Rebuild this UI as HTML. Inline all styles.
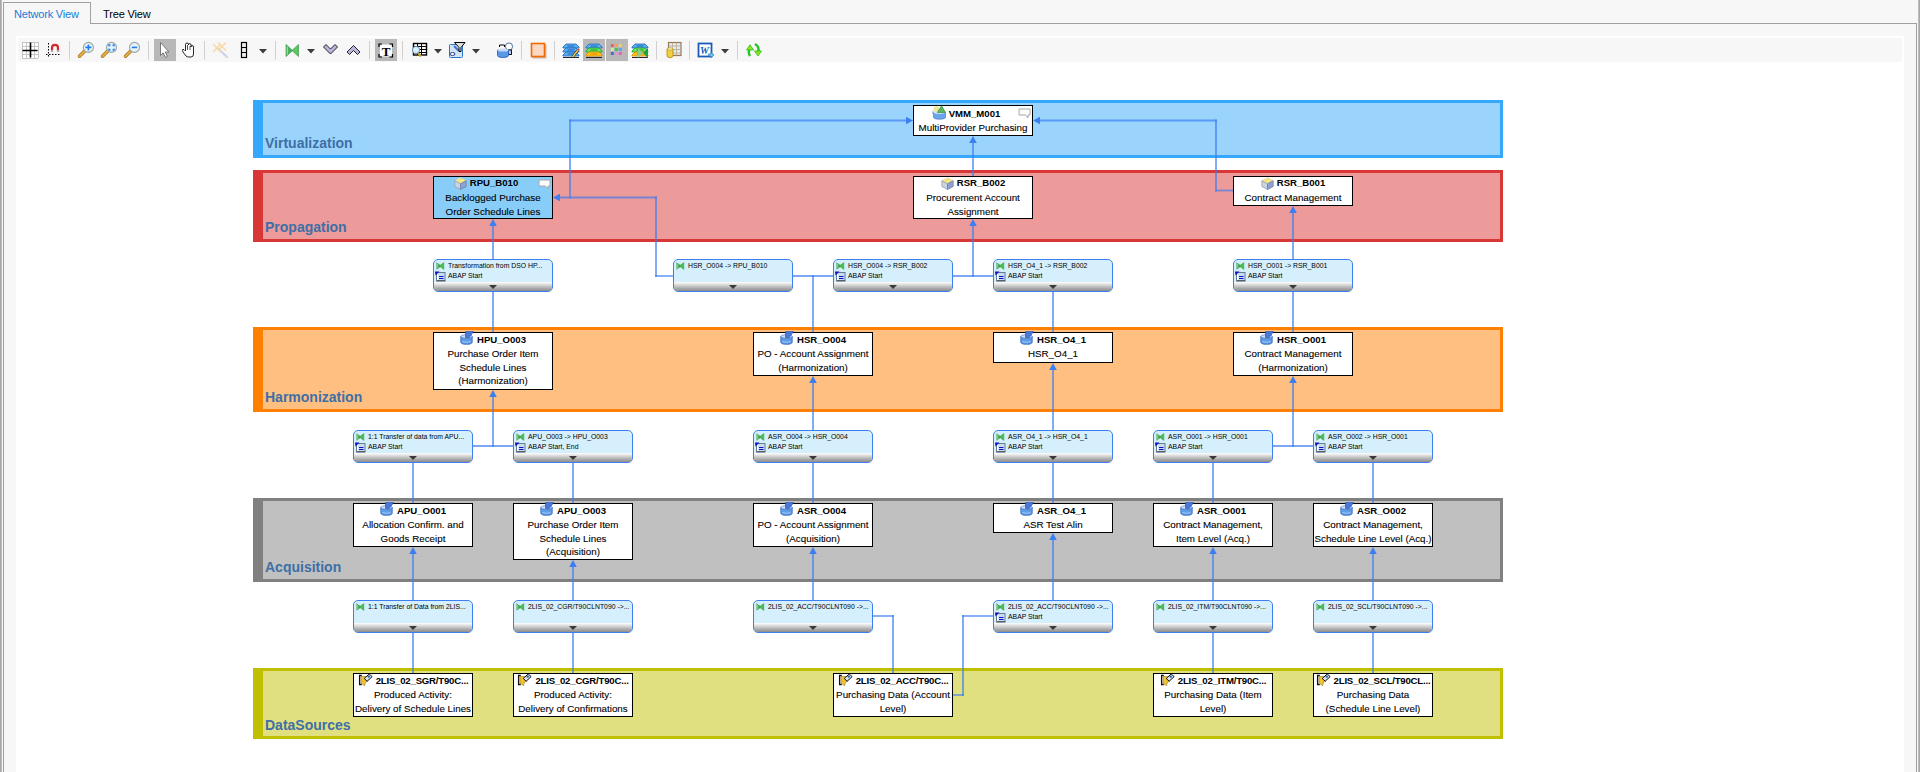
<!DOCTYPE html>
<html><head><meta charset="utf-8">
<style>
*{box-sizing:border-box;}
html,body{margin:0;padding:0;}
body{width:1920px;height:772px;overflow:hidden;position:relative;background:#f7f7f7;font-family:"Liberation Sans",sans-serif;}
.a{position:absolute;}
.band{position:absolute;left:253px;width:1250px;border-style:solid;border-width:3px 3px 3px 10px;}
.blab{position:absolute;left:12px;font-weight:bold;font-size:14px;color:#3e6fa6;line-height:14px;}
.n{position:absolute;width:120px;border:1px solid #000;text-align:center;color:#000;}
.nt{position:relative;top:-1px;height:14px;line-height:14px;font-size:9.6px;font-weight:bold;white-space:nowrap;}
.nt svg{vertical-align:-2px;margin-right:3px;}
.nl{height:13.5px;line-height:13.5px;font-size:9.8px;white-space:nowrap;-webkit-text-stroke:0.1px #000;}
.cm{position:absolute;right:1px;top:2px;line-height:0;}
.cm svg{display:block;}
.t{position:absolute;width:120px;height:33px;border:1px solid #3b7ff0;border-radius:5px;background:#d6effc;overflow:hidden;}
.tl{position:absolute;left:14px;font-size:6.85px;line-height:10px;white-space:nowrap;color:#000;}
.ti{position:absolute;left:2px;line-height:0;}
.ti svg{display:block;}
.tb{position:absolute;left:0;right:0;bottom:0;height:9.5px;background:linear-gradient(#fefefe,#e2e2e2 25%,#b0b0b0 65%,#8c8c8c);}
.tri{position:absolute;left:55px;bottom:2.3px;width:0;height:0;border-left:4px solid transparent;border-right:4px solid transparent;border-top:4px solid #3a3a3a;}
.tbi{position:absolute;top:42px;}
.sep{position:absolute;top:41px;width:1px;height:18px;background:#c8c8c8;}
.dd{position:absolute;top:49px;width:0;height:0;border-left:4px solid transparent;border-right:4px solid transparent;border-top:4px solid #3a3a3a;}
.sel{position:absolute;top:39px;width:22px;height:22px;background:#b4b4b4;}
</style></head><body>

<div class="a" style="left:0;top:0;width:2px;height:772px;background:linear-gradient(90deg,#9c9c9c,#c8c8c8)"></div>
<div class="a" style="left:1918px;top:0;width:2px;height:772px;background:linear-gradient(90deg,#c8c8c8,#9c9c9c)"></div>
<div class="a" style="left:3px;top:23px;width:1914px;height:760px;border:1px solid #a0a0a0;background:#f7f7f7"></div>
<div class="a" style="left:3px;top:2px;width:88px;height:22px;border:1px solid #a0a0a0;border-bottom:none;background:#f7f7f7"></div>
<div class="a" style="left:14px;top:7px;font-size:11px;letter-spacing:-0.2px;line-height:14px;color:#1a7ad8">Network View</div>
<div class="a" style="left:103px;top:7px;font-size:11px;letter-spacing:-0.15px;line-height:14px;color:#000">Tree View</div>
<div class="a" style="left:16px;top:36px;width:1888px;height:740px;background:#fff"></div>
<div class="a" style="left:18px;top:38px;width:1884px;height:24px;background:#f7f7f7"></div>
<svg class="a" style="left:0;top:0" width="800" height="70" viewBox="0 0 800 70"><rect x="22" y="42" width="16" height="16" fill="#fff"/><path d="M22.5 42 V58 M22 42.5 H38" stroke="#c4c4c4" stroke-width="1"/><path d="M26.5 42 V58 M22 46.5 H38" stroke="#c4c4c4" stroke-width="1"/><path d="M30.5 42 V58 M22 50.5 H38" stroke="#c4c4c4" stroke-width="1"/><path d="M34.5 42 V58 M22 54.5 H38" stroke="#c4c4c4" stroke-width="1"/><path d="M38.5 42 V58 M22 58.5 H38" stroke="#c4c4c4" stroke-width="1"/><path d="M30.5 42.5 V57.5 M22.5 50.5 H37.5" stroke="#000" stroke-width="1.6"/><path d="M48.5 43 V57 M46 54.5 H60" stroke="#000" stroke-width="1" stroke-dasharray="1.5 1.5"/><path d="M52 51.5 V47.8 A3 3 0 0 1 58 47.8 V51.5" fill="none" stroke="#d42a2a" stroke-width="2.2"/><rect x="51" y="50" width="2" height="2" fill="#aab"/><rect x="57" y="50" width="2" height="2" fill="#aab"/><rect x="69" y="41" width="1" height="18.5" fill="#cfcfcf"/><line x1="79.4" y1="56.2" x2="84.4" y2="51.199999999999996" stroke="#a8741c" stroke-width="3.4" stroke-linecap="round"/><line x1="79.4" y1="56.2" x2="84.4" y2="51.199999999999996" stroke="#e6ad48" stroke-width="2" stroke-linecap="round"/><circle cx="88.4" cy="47.4" r="5" fill="#e8f2f2" stroke="#98a6a6" stroke-width="1.1"/><path d="M85.4 47.4 H91.4 M88.4 44.4 V50.4" stroke="#1e7ef0" stroke-width="1.6"/><line x1="102.5" y1="56.2" x2="107.5" y2="51.199999999999996" stroke="#a8741c" stroke-width="3.4" stroke-linecap="round"/><line x1="102.5" y1="56.2" x2="107.5" y2="51.199999999999996" stroke="#e6ad48" stroke-width="2" stroke-linecap="round"/><circle cx="111.5" cy="47.4" r="5" fill="#e8f2f2" stroke="#98a6a6" stroke-width="1.1"/><path d="M109 46.5 V45 H110.5 M112.5 45 H114 V46.5 M114 48.5 V50 H112.5 M110.5 50 H109 V48.5" fill="none" stroke="#1e7ef0" stroke-width="1.3"/><line x1="125.5" y1="56.2" x2="130.5" y2="51.199999999999996" stroke="#a8741c" stroke-width="3.4" stroke-linecap="round"/><line x1="125.5" y1="56.2" x2="130.5" y2="51.199999999999996" stroke="#e6ad48" stroke-width="2" stroke-linecap="round"/><circle cx="134.5" cy="47.4" r="5" fill="#e8f2f2" stroke="#98a6a6" stroke-width="1.1"/><path d="M131.8 47.4 H137.2" stroke="#1e7ef0" stroke-width="1.6"/><rect x="148" y="41" width="1" height="18.5" fill="#cfcfcf"/><rect x="154" y="39" width="22" height="22" fill="#b8b8b8"/><path d="M160.5 42.5 L160.5 55.5 L163.2 52.8 L165.5 57.5 L167.5 56.5 L165.3 52 L169 52Z" fill="#fff" stroke="#777" stroke-width="1"/><path d="M184.5 50.5 L183 49 Q182 50 183 52 L186 56 Q187 57 189 57 L191 57 Q193.5 57 193.5 54 L193.5 47 Q193.5 45.5 192 45.5 Q191 45.5 191 47 L191 45 Q191 43.5 189.5 43.5 Q188.5 43.5 188.5 45 L188.5 44.5 Q188.5 43 187 43 Q185.5 43 185.5 44.5 L185.5 51" fill="#fff" stroke="#111" stroke-width="0.9"/><path d="M187.5 45 V50 M190 46 V50" stroke="#111" stroke-width=".7"/><rect x="204" y="41" width="1" height="18.5" fill="#cfcfcf"/><line x1="218" y1="48.5" x2="227" y2="57" stroke="#cdd4e6" stroke-width="2.2" stroke-linecap="round"/><path d="M213 44 L221 52 M221 44 L213 52 M218 42.5 L226 50.5 M226 42.5 L218 50.5" stroke="#fbd6a0" stroke-width="1.3"/><rect x="241.5" y="42.5" width="5" height="15" fill="#eee" stroke="#000" stroke-width="1.2"/><path d="M241.5 47.5 H246.5 M241.5 52.5 H246.5" stroke="#000" stroke-width="1"/><path d="M259 49 L267 49 L263 53.5Z" fill="#3c3c3c"/><rect x="275" y="41" width="1" height="18.5" fill="#cfcfcf"/><path d="M286 44.5 L292.5 50.5 L286 56.5Z" fill="#4cb063" stroke="#2a8a3e" stroke-width=".6"/><path d="M298.5 44.5 L292 50.5 L298.5 56.5Z" fill="#5cc85c" stroke="#2a8a3e" stroke-width=".6"/><path d="M286.7 46 L288 47 L288 54 L286.7 55Z" fill="#9adc8c"/><path d="M307 49 L315 49 L311 53.5Z" fill="#3c3c3c"/><path d="M323.5 47 L326 44.5 L330.5 49 L335 44.5 L337.5 47 L330.5 54Z" fill="#b9b6dc" stroke="#111" stroke-width=".9"/><path d="M347 52 L349.5 54.5 L353.5 50.5 L357.5 54.5 L360 52 L353.5 45.5Z" fill="#b9b6dc" stroke="#111" stroke-width=".9"/><rect x="369" y="41" width="1" height="18.5" fill="#cfcfcf"/><rect x="375" y="39" width="22" height="22" fill="#b8b8b8"/><rect x="380" y="44.5" width="12" height="12" rx="1.5" fill="#fdfdfd"/><path d="M379 47 V44 H382 M389.5 44 H392.5 V47 M392.5 54 V57 H389.5 M382 57 H379 V54" fill="none" stroke="#000" stroke-width="1.2"/><text x="386" y="55.5" text-anchor="middle" font-family="Liberation Serif" font-weight="bold" font-size="13" fill="#000">T</text><rect x="402" y="41" width="1" height="18.5" fill="#cfcfcf"/><rect x="413.5" y="43.5" width="13" height="11.5" fill="#fff" stroke="#000" stroke-width="1.4"/><path d="M413.5 46.5 H426.5 M413.5 49.5 H426.5 M413.5 52.5 H426.5 M417.5 43.5 V55 M421.5 43.5 V55" stroke="#000" stroke-width="1"/><line x1="418" y1="53" x2="421" y2="56.5" stroke="#c8a020" stroke-width="2.2"/><circle cx="416" cy="50" r="3.6" fill="#d8f0ff" stroke="#6a8aa8" stroke-width="1"/><path d="M434 49 L442 49 L438 53.5Z" fill="#3c3c3c"/><rect x="449.5" y="44.5" width="13" height="13" rx="1" fill="#d4e2f6" stroke="#2a78c8" stroke-width="1"/><path d="M454 46 L459 51" stroke="#3a70d8" stroke-width="2"/><ellipse cx="452.5" cy="54" rx="2.5" ry="1.5" fill="#fff" stroke="#1e3c8c" stroke-width="1"/><path d="M454.5 42.5 L465 42.5 L461 47.5 L461 51.5 L459 51.5 L459 47.5Z" fill="#e0e0e0" stroke="#000" stroke-width="1"/><path d="M472 49 L480 49 L476 53.5Z" fill="#3c3c3c"/><circle cx="509" cy="46.5" r="3.6" fill="#fff" stroke="#2a4a8a" stroke-width=".8"/><path d="M499.5 47 V45 H504.5 V47" fill="none" stroke="#000" stroke-width="1"/><rect x="508" y="50" width="3.5" height="4.5" fill="#b8c8f0" stroke="#000" stroke-width=".9"/><path d="M497.5 50 V55.5 Q497.5 57.5 503 57.5 Q508.5 57.5 508.5 55.5 V50Z" fill="#5a98e8" stroke="#2a5ab0" stroke-width=".8"/><ellipse cx="503" cy="50" rx="5.5" ry="1.6" fill="#c8daf6"/><rect x="521" y="41" width="1" height="18.5" fill="#cfcfcf"/><rect x="532.5" y="44.5" width="14" height="14" fill="#b09080" opacity=".6"/><rect x="531.5" y="43.5" width="13" height="13" fill="#fdd9c4" stroke="#ef6a00" stroke-width="1.6"/><rect x="554" y="41" width="1" height="18.5" fill="#cfcfcf"/><path d="M566 44 L576 44 L579 47 L579 48 L563 48 L563 47Z" fill="#5ab0f4" stroke="#1e64b8" stroke-width=".8"/><path d="M567.5 46 H574.5" stroke="#1e64b8" stroke-width="1"/><path d="M566 48 L576 48 L579 51 L579 52 L563 52 L563 51Z" fill="#5ab0f4" stroke="#1e64b8" stroke-width=".8"/><path d="M567.5 50 H574.5" stroke="#1e64b8" stroke-width="1"/><path d="M566 52 L576 52 L579 55 L579 56 L563 56 L563 55Z" fill="#5ab0f4" stroke="#1e64b8" stroke-width=".8"/><path d="M567.5 54 H574.5" stroke="#1e64b8" stroke-width="1"/><rect x="563" y="57" width="16" height="1" fill="#223"/><line x1="572.5" y1="57" x2="578.5" y2="49.5" stroke="#222" stroke-width="2.4"/><line x1="572.5" y1="57" x2="578.5" y2="49.5" stroke="#f2d24a" stroke-width="1.4"/><circle cx="578.5" cy="49.5" r="1" fill="#e04040"/><rect x="583" y="39" width="22" height="22" fill="#b8b8b8"/><path d="M589 44 L599 44 L602 47 L602 48 L586 48 L586 47Z" fill="#5ab0f4" stroke="#1e64b8" stroke-width=".8"/><path d="M590.5 46 H597.5" stroke="#1e64b8" stroke-width="1"/><path d="M589 48 L599 48 L602 51 L602 52 L586 52 L586 51Z" fill="#6ae46a" stroke="#1aa01a" stroke-width=".8"/><path d="M590.5 50 H597.5" stroke="#1aa01a" stroke-width="1"/><path d="M589 52 L599 52 L602 55 L602 56 L586 56 L586 55Z" fill="#ffc21a" stroke="#e08a00" stroke-width=".8"/><path d="M590.5 54 H597.5" stroke="#e08a00" stroke-width="1"/><rect x="586" y="57" width="16" height="1" fill="#223"/><rect x="606" y="39" width="22" height="22" fill="#b8b8b8"/><rect x="610.8" y="44" width="3" height="3" fill="#f06060"/><rect x="614.8" y="44" width="3" height="3" fill="#f8a060"/><rect x="618.8" y="44" width="3" height="3" fill="#f0d060"/><rect x="610.8" y="48" width="3" height="3" fill="#c8eca0"/><rect x="614.8" y="48" width="3" height="3" fill="#40c060"/><rect x="618.8" y="48" width="3" height="3" fill="#50a8f0"/><rect x="610.8" y="52" width="3" height="3" fill="#4a70c0"/><rect x="614.8" y="52" width="3" height="3" fill="#e090e0"/><rect x="618.8" y="52" width="3" height="3" fill="#f060a8"/><path d="M635 44 L645 44 L648 47 L648 48 L632 48 L632 47Z" fill="#5ab0f4" stroke="#1e64b8" stroke-width=".8"/><path d="M636.5 46 H643.5" stroke="#1e64b8" stroke-width="1"/><path d="M635 48 L645 48 L648 51 L648 52 L632 52 L632 51Z" fill="#6ae46a" stroke="#1aa01a" stroke-width=".8"/><path d="M636.5 50 H643.5" stroke="#1aa01a" stroke-width="1"/><path d="M635 52 L645 52 L648 55 L648 56 L632 56 L632 55Z" fill="#ffc21a" stroke="#e08a00" stroke-width=".8"/><path d="M636.5 54 H643.5" stroke="#e08a00" stroke-width="1"/><rect x="632" y="57" width="16" height="1" fill="#223"/><path d="M638 48 L643 53 L638 58Z" fill="#8ccc8c"/><path d="M648 48 L643 53 L648 58Z" fill="#1ea040"/><rect x="656" y="41" width="1" height="18.5" fill="#cfcfcf"/><rect x="668.5" y="42.5" width="12.5" height="13" fill="#d8ecfc" stroke="#9a7850" stroke-width="1.2"/><path d="M668.5 46 H681 M668.5 49.5 H681 M668.5 53 H681 M672.5 42.5 V55.5 M676.5 42.5 V55.5" stroke="#c0a888" stroke-width=".8"/><path d="M667 49 V56 Q667 57.5 670 57.5 Q673 57.5 673 56 V49Z" fill="#f2d040" stroke="#b08810" stroke-width=".8"/><ellipse cx="670" cy="49" rx="3" ry="1.2" fill="#fff4b0" stroke="#b08810" stroke-width=".6"/><rect x="689" y="41" width="1" height="18.5" fill="#cfcfcf"/><rect x="698.5" y="43.5" width="13" height="13" fill="#fff" stroke="#1a5ab8" stroke-width="1.8"/><text x="704.5" y="54" text-anchor="middle" font-family="Liberation Serif" font-style="italic" font-weight="bold" font-size="10" fill="#1a5ab8">W</text><path d="M708.5 54 H711 V52.5 L714 55 L711 57.5 V56 H708.5Z" fill="#6ad0f0" stroke="#2a78b8" stroke-width=".7"/><path d="M721 49 L729 49 L725 53.5Z" fill="#3c3c3c"/><rect x="737" y="41" width="1" height="18.5" fill="#cfcfcf"/><path d="M750 56 Q747.5 52 750 48.5" fill="none" stroke="#1ec81e" stroke-width="2.4"/><path d="M746.5 50 L750 44.8 L753.5 50Z" fill="#9ae01a" stroke="#1ec81e" stroke-width=".8"/><path d="M755 44 Q760 47 758 52" fill="none" stroke="#1ec81e" stroke-width="2.4"/><path d="M754.5 51 L758 56 L761.5 51Z" fill="#9ae01a" stroke="#1ec81e" stroke-width=".8"/></svg>
<div class="band" style="top:100px;height:58px;border-color:#35a8fc;background:#9ad4fd"><div class="blab" style="top:33px;left:2px">Virtualization</div></div>
<div class="band" style="top:170px;height:72px;border-color:#d93636;background:#ec9a9a"><div class="blab" style="top:47px;left:2px">Propagation</div></div>
<div class="band" style="top:327px;height:85px;border-color:#ff8000;background:#ffbf80"><div class="blab" style="top:60px;left:2px">Harmonization</div></div>
<div class="band" style="top:498px;height:84px;border-color:#808080;background:#c0c0c0"><div class="blab" style="top:59px;left:2px">Acquisition</div></div>
<div class="band" style="top:668px;height:71px;border-color:#c0c000;background:#e0e080"><div class="blab" style="top:47px;left:2px">DataSources</div></div>
<svg class="a" style="left:0;top:0" width="1920" height="772" viewBox="0 0 1920 772"><line x1="673" y1="276" x2="656" y2="276" stroke="#3d7ef0" stroke-opacity=".68" stroke-width="1.8" stroke-linecap="square"/><line x1="656" y1="276" x2="656" y2="197.5" stroke="#3d7ef0" stroke-opacity=".72" stroke-width="1.8" stroke-linecap="square"/><line x1="656" y1="197.5" x2="560" y2="197.5" stroke="#3d7ef0" stroke-opacity=".68" stroke-width="1.8" stroke-linecap="square"/><polygon fill="#3d7ef0" points="553,197.5 560,193.7 560,201.3"/><line x1="570" y1="197.5" x2="570" y2="120.5" stroke="#3d7ef0" stroke-opacity=".72" stroke-width="1.8" stroke-linecap="square"/><line x1="570" y1="120.5" x2="906" y2="120.5" stroke="#3d7ef0" stroke-opacity=".68" stroke-width="1.8" stroke-linecap="square"/><polygon fill="#3d7ef0" points="913,120.5 906,116.7 906,124.3"/><line x1="973" y1="176" x2="973" y2="143" stroke="#3d7ef0" stroke-opacity=".72" stroke-width="1.8" stroke-linecap="square"/><polygon fill="#3d7ef0" points="973,136 969.2,143 976.8,143"/><line x1="1233" y1="190.5" x2="1216" y2="190.5" stroke="#3d7ef0" stroke-opacity=".68" stroke-width="1.8" stroke-linecap="square"/><line x1="1216" y1="190.5" x2="1216" y2="120.5" stroke="#3d7ef0" stroke-opacity=".72" stroke-width="1.8" stroke-linecap="square"/><line x1="1216" y1="120.5" x2="1040" y2="120.5" stroke="#3d7ef0" stroke-opacity=".68" stroke-width="1.8" stroke-linecap="square"/><polygon fill="#3d7ef0" points="1033,120.5 1040,116.7 1040,124.3"/><line x1="493" y1="259" x2="493" y2="226" stroke="#3d7ef0" stroke-opacity=".72" stroke-width="1.8" stroke-linecap="square"/><polygon fill="#3d7ef0" points="493,219 489.2,226 496.8,226"/><line x1="953" y1="276" x2="993" y2="276" stroke="#3d7ef0" stroke-opacity=".68" stroke-width="1.8" stroke-linecap="square"/><line x1="973" y1="276" x2="973" y2="226" stroke="#3d7ef0" stroke-opacity=".72" stroke-width="1.8" stroke-linecap="square"/><polygon fill="#3d7ef0" points="973,219 969.2,226 976.8,226"/><line x1="1293" y1="259" x2="1293" y2="213" stroke="#3d7ef0" stroke-opacity=".72" stroke-width="1.8" stroke-linecap="square"/><polygon fill="#3d7ef0" points="1293,206 1289.2,213 1296.8,213"/><line x1="493" y1="292" x2="493" y2="332" stroke="#3d7ef0" stroke-opacity=".72" stroke-width="1.8" stroke-linecap="square"/><line x1="793" y1="276" x2="833" y2="276" stroke="#3d7ef0" stroke-opacity=".68" stroke-width="1.8" stroke-linecap="square"/><line x1="813" y1="276" x2="813" y2="332" stroke="#3d7ef0" stroke-opacity=".72" stroke-width="1.8" stroke-linecap="square"/><line x1="1053" y1="292" x2="1053" y2="332" stroke="#3d7ef0" stroke-opacity=".72" stroke-width="1.8" stroke-linecap="square"/><line x1="1293" y1="292" x2="1293" y2="332" stroke="#3d7ef0" stroke-opacity=".72" stroke-width="1.8" stroke-linecap="square"/><line x1="473" y1="446" x2="513" y2="446" stroke="#3d7ef0" stroke-opacity=".68" stroke-width="1.8" stroke-linecap="square"/><line x1="493" y1="446" x2="493" y2="397" stroke="#3d7ef0" stroke-opacity=".72" stroke-width="1.8" stroke-linecap="square"/><polygon fill="#3d7ef0" points="493,390 489.2,397 496.8,397"/><line x1="813" y1="430" x2="813" y2="383" stroke="#3d7ef0" stroke-opacity=".72" stroke-width="1.8" stroke-linecap="square"/><polygon fill="#3d7ef0" points="813,376 809.2,383 816.8,383"/><line x1="1053" y1="430" x2="1053" y2="370" stroke="#3d7ef0" stroke-opacity=".72" stroke-width="1.8" stroke-linecap="square"/><polygon fill="#3d7ef0" points="1053,363 1049.2,370 1056.8,370"/><line x1="1273" y1="446" x2="1313" y2="446" stroke="#3d7ef0" stroke-opacity=".68" stroke-width="1.8" stroke-linecap="square"/><line x1="1293" y1="446" x2="1293" y2="383" stroke="#3d7ef0" stroke-opacity=".72" stroke-width="1.8" stroke-linecap="square"/><polygon fill="#3d7ef0" points="1293,376 1289.2,383 1296.8,383"/><line x1="413" y1="463" x2="413" y2="503" stroke="#3d7ef0" stroke-opacity=".72" stroke-width="1.8" stroke-linecap="square"/><line x1="573" y1="463" x2="573" y2="503" stroke="#3d7ef0" stroke-opacity=".72" stroke-width="1.8" stroke-linecap="square"/><line x1="813" y1="463" x2="813" y2="503" stroke="#3d7ef0" stroke-opacity=".72" stroke-width="1.8" stroke-linecap="square"/><line x1="1053" y1="463" x2="1053" y2="503" stroke="#3d7ef0" stroke-opacity=".72" stroke-width="1.8" stroke-linecap="square"/><line x1="1213" y1="463" x2="1213" y2="503" stroke="#3d7ef0" stroke-opacity=".72" stroke-width="1.8" stroke-linecap="square"/><line x1="1373" y1="463" x2="1373" y2="503" stroke="#3d7ef0" stroke-opacity=".72" stroke-width="1.8" stroke-linecap="square"/><line x1="413" y1="600" x2="413" y2="554" stroke="#3d7ef0" stroke-opacity=".72" stroke-width="1.8" stroke-linecap="square"/><polygon fill="#3d7ef0" points="413,547 409.2,554 416.8,554"/><line x1="573" y1="600" x2="573" y2="567" stroke="#3d7ef0" stroke-opacity=".72" stroke-width="1.8" stroke-linecap="square"/><polygon fill="#3d7ef0" points="573,560 569.2,567 576.8,567"/><line x1="813" y1="600" x2="813" y2="554" stroke="#3d7ef0" stroke-opacity=".72" stroke-width="1.8" stroke-linecap="square"/><polygon fill="#3d7ef0" points="813,547 809.2,554 816.8,554"/><line x1="1053" y1="600" x2="1053" y2="540" stroke="#3d7ef0" stroke-opacity=".72" stroke-width="1.8" stroke-linecap="square"/><polygon fill="#3d7ef0" points="1053,533 1049.2,540 1056.8,540"/><line x1="1213" y1="600" x2="1213" y2="554" stroke="#3d7ef0" stroke-opacity=".72" stroke-width="1.8" stroke-linecap="square"/><polygon fill="#3d7ef0" points="1213,547 1209.2,554 1216.8,554"/><line x1="1373" y1="600" x2="1373" y2="554" stroke="#3d7ef0" stroke-opacity=".72" stroke-width="1.8" stroke-linecap="square"/><polygon fill="#3d7ef0" points="1373,547 1369.2,554 1376.8,554"/><line x1="413" y1="633" x2="413" y2="673" stroke="#3d7ef0" stroke-opacity=".72" stroke-width="1.8" stroke-linecap="square"/><line x1="573" y1="633" x2="573" y2="673" stroke="#3d7ef0" stroke-opacity=".72" stroke-width="1.8" stroke-linecap="square"/><line x1="873" y1="616" x2="893" y2="616" stroke="#3d7ef0" stroke-opacity=".68" stroke-width="1.8" stroke-linecap="square"/><line x1="893" y1="616" x2="893" y2="673" stroke="#3d7ef0" stroke-opacity=".72" stroke-width="1.8" stroke-linecap="square"/><line x1="953" y1="695" x2="963" y2="695" stroke="#3d7ef0" stroke-opacity=".68" stroke-width="1.8" stroke-linecap="square"/><line x1="963" y1="695" x2="963" y2="616" stroke="#3d7ef0" stroke-opacity=".72" stroke-width="1.8" stroke-linecap="square"/><line x1="963" y1="616" x2="993" y2="616" stroke="#3d7ef0" stroke-opacity=".68" stroke-width="1.8" stroke-linecap="square"/><line x1="1213" y1="633" x2="1213" y2="673" stroke="#3d7ef0" stroke-opacity=".72" stroke-width="1.8" stroke-linecap="square"/><line x1="1373" y1="633" x2="1373" y2="673" stroke="#3d7ef0" stroke-opacity=".72" stroke-width="1.8" stroke-linecap="square"/></svg>
<div class="t" style="left:433px;top:259px"><div class="ti" style="top:2px"><svg width="9" height="8" viewBox="0 0 9 8"><path d="M0.5 0.2 L4.3 2.9 L8.1 0.2 L8.1 7.8 L4.3 5.1 L0.5 7.8Z" fill="#3aa04c"/><path d="M1.3 1.2 L2.3 1.8 L2.3 6.2 L1.3 6.8Z" fill="#9ad88e"/><path d="M4.3 2.9 L8.1 0.2 L8.1 7.8 L4.3 5.1Z" fill="#4cbc56"/></svg></div><div class="tl" style="top:1px">Transformation from DSO HP...</div><div class="ti" style="top:11px;left:1px"><svg width="11" height="11" viewBox="0 0 11 11"><rect x="1.5" y="1.5" width="8.5" height="8.5" fill="#c4def4" stroke="#6a7890" stroke-width="1"/><rect x="2" y="3" width="1.3" height="6.5" fill="#fff"/><path d="M2 9.6 H10.2" stroke="#606060" stroke-width="1.2"/><path d="M0 0.5 H4.5 L0.5 4.5Z" fill="#1010c8"/><path d="M4 5.5 H8.5 M4 7.5 H8.5" stroke="#1010c8" stroke-width="1"/></svg></div><div class="tl" style="top:11px">ABAP Start</div><div class="tb"><div class="tri"></div></div></div>
<div class="t" style="left:673px;top:259px"><div class="ti" style="top:2px"><svg width="9" height="8" viewBox="0 0 9 8"><path d="M0.5 0.2 L4.3 2.9 L8.1 0.2 L8.1 7.8 L4.3 5.1 L0.5 7.8Z" fill="#3aa04c"/><path d="M1.3 1.2 L2.3 1.8 L2.3 6.2 L1.3 6.8Z" fill="#9ad88e"/><path d="M4.3 2.9 L8.1 0.2 L8.1 7.8 L4.3 5.1Z" fill="#4cbc56"/></svg></div><div class="tl" style="top:1px">HSR_O004 -> RPU_B010</div><div class="tb"><div class="tri"></div></div></div>
<div class="t" style="left:833px;top:259px"><div class="ti" style="top:2px"><svg width="9" height="8" viewBox="0 0 9 8"><path d="M0.5 0.2 L4.3 2.9 L8.1 0.2 L8.1 7.8 L4.3 5.1 L0.5 7.8Z" fill="#3aa04c"/><path d="M1.3 1.2 L2.3 1.8 L2.3 6.2 L1.3 6.8Z" fill="#9ad88e"/><path d="M4.3 2.9 L8.1 0.2 L8.1 7.8 L4.3 5.1Z" fill="#4cbc56"/></svg></div><div class="tl" style="top:1px">HSR_O004 -> RSR_B002</div><div class="ti" style="top:11px;left:1px"><svg width="11" height="11" viewBox="0 0 11 11"><rect x="1.5" y="1.5" width="8.5" height="8.5" fill="#c4def4" stroke="#6a7890" stroke-width="1"/><rect x="2" y="3" width="1.3" height="6.5" fill="#fff"/><path d="M2 9.6 H10.2" stroke="#606060" stroke-width="1.2"/><path d="M0 0.5 H4.5 L0.5 4.5Z" fill="#1010c8"/><path d="M4 5.5 H8.5 M4 7.5 H8.5" stroke="#1010c8" stroke-width="1"/></svg></div><div class="tl" style="top:11px">ABAP Start</div><div class="tb"><div class="tri"></div></div></div>
<div class="t" style="left:993px;top:259px"><div class="ti" style="top:2px"><svg width="9" height="8" viewBox="0 0 9 8"><path d="M0.5 0.2 L4.3 2.9 L8.1 0.2 L8.1 7.8 L4.3 5.1 L0.5 7.8Z" fill="#3aa04c"/><path d="M1.3 1.2 L2.3 1.8 L2.3 6.2 L1.3 6.8Z" fill="#9ad88e"/><path d="M4.3 2.9 L8.1 0.2 L8.1 7.8 L4.3 5.1Z" fill="#4cbc56"/></svg></div><div class="tl" style="top:1px">HSR_O4_1 -> RSR_B002</div><div class="ti" style="top:11px;left:1px"><svg width="11" height="11" viewBox="0 0 11 11"><rect x="1.5" y="1.5" width="8.5" height="8.5" fill="#c4def4" stroke="#6a7890" stroke-width="1"/><rect x="2" y="3" width="1.3" height="6.5" fill="#fff"/><path d="M2 9.6 H10.2" stroke="#606060" stroke-width="1.2"/><path d="M0 0.5 H4.5 L0.5 4.5Z" fill="#1010c8"/><path d="M4 5.5 H8.5 M4 7.5 H8.5" stroke="#1010c8" stroke-width="1"/></svg></div><div class="tl" style="top:11px">ABAP Start</div><div class="tb"><div class="tri"></div></div></div>
<div class="t" style="left:1233px;top:259px"><div class="ti" style="top:2px"><svg width="9" height="8" viewBox="0 0 9 8"><path d="M0.5 0.2 L4.3 2.9 L8.1 0.2 L8.1 7.8 L4.3 5.1 L0.5 7.8Z" fill="#3aa04c"/><path d="M1.3 1.2 L2.3 1.8 L2.3 6.2 L1.3 6.8Z" fill="#9ad88e"/><path d="M4.3 2.9 L8.1 0.2 L8.1 7.8 L4.3 5.1Z" fill="#4cbc56"/></svg></div><div class="tl" style="top:1px">HSR_O001 -> RSR_B001</div><div class="ti" style="top:11px;left:1px"><svg width="11" height="11" viewBox="0 0 11 11"><rect x="1.5" y="1.5" width="8.5" height="8.5" fill="#c4def4" stroke="#6a7890" stroke-width="1"/><rect x="2" y="3" width="1.3" height="6.5" fill="#fff"/><path d="M2 9.6 H10.2" stroke="#606060" stroke-width="1.2"/><path d="M0 0.5 H4.5 L0.5 4.5Z" fill="#1010c8"/><path d="M4 5.5 H8.5 M4 7.5 H8.5" stroke="#1010c8" stroke-width="1"/></svg></div><div class="tl" style="top:11px">ABAP Start</div><div class="tb"><div class="tri"></div></div></div>
<div class="t" style="left:353px;top:430px"><div class="ti" style="top:2px"><svg width="9" height="8" viewBox="0 0 9 8"><path d="M0.5 0.2 L4.3 2.9 L8.1 0.2 L8.1 7.8 L4.3 5.1 L0.5 7.8Z" fill="#3aa04c"/><path d="M1.3 1.2 L2.3 1.8 L2.3 6.2 L1.3 6.8Z" fill="#9ad88e"/><path d="M4.3 2.9 L8.1 0.2 L8.1 7.8 L4.3 5.1Z" fill="#4cbc56"/></svg></div><div class="tl" style="top:1px">1:1 Transfer of data from APU...</div><div class="ti" style="top:11px;left:1px"><svg width="11" height="11" viewBox="0 0 11 11"><rect x="1.5" y="1.5" width="8.5" height="8.5" fill="#c4def4" stroke="#6a7890" stroke-width="1"/><rect x="2" y="3" width="1.3" height="6.5" fill="#fff"/><path d="M2 9.6 H10.2" stroke="#606060" stroke-width="1.2"/><path d="M0 0.5 H4.5 L0.5 4.5Z" fill="#1010c8"/><path d="M4 5.5 H8.5 M4 7.5 H8.5" stroke="#1010c8" stroke-width="1"/></svg></div><div class="tl" style="top:11px">ABAP Start</div><div class="tb"><div class="tri"></div></div></div>
<div class="t" style="left:513px;top:430px"><div class="ti" style="top:2px"><svg width="9" height="8" viewBox="0 0 9 8"><path d="M0.5 0.2 L4.3 2.9 L8.1 0.2 L8.1 7.8 L4.3 5.1 L0.5 7.8Z" fill="#3aa04c"/><path d="M1.3 1.2 L2.3 1.8 L2.3 6.2 L1.3 6.8Z" fill="#9ad88e"/><path d="M4.3 2.9 L8.1 0.2 L8.1 7.8 L4.3 5.1Z" fill="#4cbc56"/></svg></div><div class="tl" style="top:1px">APU_O003 -> HPU_O003</div><div class="ti" style="top:11px;left:1px"><svg width="11" height="11" viewBox="0 0 11 11"><rect x="1.5" y="1.5" width="8.5" height="8.5" fill="#c4def4" stroke="#6a7890" stroke-width="1"/><rect x="2" y="3" width="1.3" height="6.5" fill="#fff"/><path d="M2 9.6 H10.2" stroke="#606060" stroke-width="1.2"/><path d="M0 0.5 H4.5 L0.5 4.5Z" fill="#1010c8"/><path d="M4 5.5 H8.5 M4 7.5 H8.5" stroke="#1010c8" stroke-width="1"/></svg></div><div class="tl" style="top:11px">ABAP Start, End</div><div class="tb"><div class="tri"></div></div></div>
<div class="t" style="left:753px;top:430px"><div class="ti" style="top:2px"><svg width="9" height="8" viewBox="0 0 9 8"><path d="M0.5 0.2 L4.3 2.9 L8.1 0.2 L8.1 7.8 L4.3 5.1 L0.5 7.8Z" fill="#3aa04c"/><path d="M1.3 1.2 L2.3 1.8 L2.3 6.2 L1.3 6.8Z" fill="#9ad88e"/><path d="M4.3 2.9 L8.1 0.2 L8.1 7.8 L4.3 5.1Z" fill="#4cbc56"/></svg></div><div class="tl" style="top:1px">ASR_O004 -> HSR_O004</div><div class="ti" style="top:11px;left:1px"><svg width="11" height="11" viewBox="0 0 11 11"><rect x="1.5" y="1.5" width="8.5" height="8.5" fill="#c4def4" stroke="#6a7890" stroke-width="1"/><rect x="2" y="3" width="1.3" height="6.5" fill="#fff"/><path d="M2 9.6 H10.2" stroke="#606060" stroke-width="1.2"/><path d="M0 0.5 H4.5 L0.5 4.5Z" fill="#1010c8"/><path d="M4 5.5 H8.5 M4 7.5 H8.5" stroke="#1010c8" stroke-width="1"/></svg></div><div class="tl" style="top:11px">ABAP Start</div><div class="tb"><div class="tri"></div></div></div>
<div class="t" style="left:993px;top:430px"><div class="ti" style="top:2px"><svg width="9" height="8" viewBox="0 0 9 8"><path d="M0.5 0.2 L4.3 2.9 L8.1 0.2 L8.1 7.8 L4.3 5.1 L0.5 7.8Z" fill="#3aa04c"/><path d="M1.3 1.2 L2.3 1.8 L2.3 6.2 L1.3 6.8Z" fill="#9ad88e"/><path d="M4.3 2.9 L8.1 0.2 L8.1 7.8 L4.3 5.1Z" fill="#4cbc56"/></svg></div><div class="tl" style="top:1px">ASR_O4_1 -> HSR_O4_1</div><div class="ti" style="top:11px;left:1px"><svg width="11" height="11" viewBox="0 0 11 11"><rect x="1.5" y="1.5" width="8.5" height="8.5" fill="#c4def4" stroke="#6a7890" stroke-width="1"/><rect x="2" y="3" width="1.3" height="6.5" fill="#fff"/><path d="M2 9.6 H10.2" stroke="#606060" stroke-width="1.2"/><path d="M0 0.5 H4.5 L0.5 4.5Z" fill="#1010c8"/><path d="M4 5.5 H8.5 M4 7.5 H8.5" stroke="#1010c8" stroke-width="1"/></svg></div><div class="tl" style="top:11px">ABAP Start</div><div class="tb"><div class="tri"></div></div></div>
<div class="t" style="left:1153px;top:430px"><div class="ti" style="top:2px"><svg width="9" height="8" viewBox="0 0 9 8"><path d="M0.5 0.2 L4.3 2.9 L8.1 0.2 L8.1 7.8 L4.3 5.1 L0.5 7.8Z" fill="#3aa04c"/><path d="M1.3 1.2 L2.3 1.8 L2.3 6.2 L1.3 6.8Z" fill="#9ad88e"/><path d="M4.3 2.9 L8.1 0.2 L8.1 7.8 L4.3 5.1Z" fill="#4cbc56"/></svg></div><div class="tl" style="top:1px">ASR_O001 -> HSR_O001</div><div class="ti" style="top:11px;left:1px"><svg width="11" height="11" viewBox="0 0 11 11"><rect x="1.5" y="1.5" width="8.5" height="8.5" fill="#c4def4" stroke="#6a7890" stroke-width="1"/><rect x="2" y="3" width="1.3" height="6.5" fill="#fff"/><path d="M2 9.6 H10.2" stroke="#606060" stroke-width="1.2"/><path d="M0 0.5 H4.5 L0.5 4.5Z" fill="#1010c8"/><path d="M4 5.5 H8.5 M4 7.5 H8.5" stroke="#1010c8" stroke-width="1"/></svg></div><div class="tl" style="top:11px">ABAP Start</div><div class="tb"><div class="tri"></div></div></div>
<div class="t" style="left:1313px;top:430px"><div class="ti" style="top:2px"><svg width="9" height="8" viewBox="0 0 9 8"><path d="M0.5 0.2 L4.3 2.9 L8.1 0.2 L8.1 7.8 L4.3 5.1 L0.5 7.8Z" fill="#3aa04c"/><path d="M1.3 1.2 L2.3 1.8 L2.3 6.2 L1.3 6.8Z" fill="#9ad88e"/><path d="M4.3 2.9 L8.1 0.2 L8.1 7.8 L4.3 5.1Z" fill="#4cbc56"/></svg></div><div class="tl" style="top:1px">ASR_O002 -> HSR_O001</div><div class="ti" style="top:11px;left:1px"><svg width="11" height="11" viewBox="0 0 11 11"><rect x="1.5" y="1.5" width="8.5" height="8.5" fill="#c4def4" stroke="#6a7890" stroke-width="1"/><rect x="2" y="3" width="1.3" height="6.5" fill="#fff"/><path d="M2 9.6 H10.2" stroke="#606060" stroke-width="1.2"/><path d="M0 0.5 H4.5 L0.5 4.5Z" fill="#1010c8"/><path d="M4 5.5 H8.5 M4 7.5 H8.5" stroke="#1010c8" stroke-width="1"/></svg></div><div class="tl" style="top:11px">ABAP Start</div><div class="tb"><div class="tri"></div></div></div>
<div class="t" style="left:353px;top:600px"><div class="ti" style="top:2px"><svg width="9" height="8" viewBox="0 0 9 8"><path d="M0.5 0.2 L4.3 2.9 L8.1 0.2 L8.1 7.8 L4.3 5.1 L0.5 7.8Z" fill="#3aa04c"/><path d="M1.3 1.2 L2.3 1.8 L2.3 6.2 L1.3 6.8Z" fill="#9ad88e"/><path d="M4.3 2.9 L8.1 0.2 L8.1 7.8 L4.3 5.1Z" fill="#4cbc56"/></svg></div><div class="tl" style="top:1px">1:1 Transfer of Data from 2LIS...</div><div class="tb"><div class="tri"></div></div></div>
<div class="t" style="left:513px;top:600px"><div class="ti" style="top:2px"><svg width="9" height="8" viewBox="0 0 9 8"><path d="M0.5 0.2 L4.3 2.9 L8.1 0.2 L8.1 7.8 L4.3 5.1 L0.5 7.8Z" fill="#3aa04c"/><path d="M1.3 1.2 L2.3 1.8 L2.3 6.2 L1.3 6.8Z" fill="#9ad88e"/><path d="M4.3 2.9 L8.1 0.2 L8.1 7.8 L4.3 5.1Z" fill="#4cbc56"/></svg></div><div class="tl" style="top:1px">2LIS_02_CGR/T90CLNT090 ->...</div><div class="tb"><div class="tri"></div></div></div>
<div class="t" style="left:753px;top:600px"><div class="ti" style="top:2px"><svg width="9" height="8" viewBox="0 0 9 8"><path d="M0.5 0.2 L4.3 2.9 L8.1 0.2 L8.1 7.8 L4.3 5.1 L0.5 7.8Z" fill="#3aa04c"/><path d="M1.3 1.2 L2.3 1.8 L2.3 6.2 L1.3 6.8Z" fill="#9ad88e"/><path d="M4.3 2.9 L8.1 0.2 L8.1 7.8 L4.3 5.1Z" fill="#4cbc56"/></svg></div><div class="tl" style="top:1px">2LIS_02_ACC/T90CLNT090 ->...</div><div class="tb"><div class="tri"></div></div></div>
<div class="t" style="left:993px;top:600px"><div class="ti" style="top:2px"><svg width="9" height="8" viewBox="0 0 9 8"><path d="M0.5 0.2 L4.3 2.9 L8.1 0.2 L8.1 7.8 L4.3 5.1 L0.5 7.8Z" fill="#3aa04c"/><path d="M1.3 1.2 L2.3 1.8 L2.3 6.2 L1.3 6.8Z" fill="#9ad88e"/><path d="M4.3 2.9 L8.1 0.2 L8.1 7.8 L4.3 5.1Z" fill="#4cbc56"/></svg></div><div class="tl" style="top:1px">2LIS_02_ACC/T90CLNT090 ->...</div><div class="ti" style="top:11px;left:1px"><svg width="11" height="11" viewBox="0 0 11 11"><rect x="1.5" y="1.5" width="8.5" height="8.5" fill="#c4def4" stroke="#6a7890" stroke-width="1"/><rect x="2" y="3" width="1.3" height="6.5" fill="#fff"/><path d="M2 9.6 H10.2" stroke="#606060" stroke-width="1.2"/><path d="M0 0.5 H4.5 L0.5 4.5Z" fill="#1010c8"/><path d="M4 5.5 H8.5 M4 7.5 H8.5" stroke="#1010c8" stroke-width="1"/></svg></div><div class="tl" style="top:11px">ABAP Start</div><div class="tb"><div class="tri"></div></div></div>
<div class="t" style="left:1153px;top:600px"><div class="ti" style="top:2px"><svg width="9" height="8" viewBox="0 0 9 8"><path d="M0.5 0.2 L4.3 2.9 L8.1 0.2 L8.1 7.8 L4.3 5.1 L0.5 7.8Z" fill="#3aa04c"/><path d="M1.3 1.2 L2.3 1.8 L2.3 6.2 L1.3 6.8Z" fill="#9ad88e"/><path d="M4.3 2.9 L8.1 0.2 L8.1 7.8 L4.3 5.1Z" fill="#4cbc56"/></svg></div><div class="tl" style="top:1px">2LIS_02_ITM/T90CLNT090 ->...</div><div class="tb"><div class="tri"></div></div></div>
<div class="t" style="left:1313px;top:600px"><div class="ti" style="top:2px"><svg width="9" height="8" viewBox="0 0 9 8"><path d="M0.5 0.2 L4.3 2.9 L8.1 0.2 L8.1 7.8 L4.3 5.1 L0.5 7.8Z" fill="#3aa04c"/><path d="M1.3 1.2 L2.3 1.8 L2.3 6.2 L1.3 6.8Z" fill="#9ad88e"/><path d="M4.3 2.9 L8.1 0.2 L8.1 7.8 L4.3 5.1Z" fill="#4cbc56"/></svg></div><div class="tl" style="top:1px">2LIS_02_SCL/T90CLNT090 ->...</div><div class="tb"><div class="tri"></div></div></div>
<div class="n" style="left:913px;top:105px;height:31px;background:#fff"><div class="nt" style="padding-right:14px"><svg width="14" height="15" viewBox="0 0 14 15" style="vertical-align:-3px"><circle cx="4.5" cy="4.5" r="3.2" fill="#eee6a0"/><path d="M0.8 6 V9" stroke="#9ab8e0" stroke-width="1.2"/><path d="M1.5 7.5 V12 Q1.5 14.2 7.5 14.2 Q13.5 14.2 13.5 12 V7.5Z" fill="#6aa4ec" stroke="#4a7cc8" stroke-width=".7"/><ellipse cx="7.5" cy="7.5" rx="6" ry="1.5" fill="#d8e8f8"/><path d="M9.5 0.8 L13.6 7.6 L5.4 7.6Z" fill="#5cb860" stroke="#2e8a3a" stroke-width=".7"/></svg>VMM_M001</div><div style="height:1px"></div><div class="nl">MultiProvider Purchasing</div><div class="cm"><svg width="13" height="11" viewBox="0 0 13 11"><path d="M1 1 L12 1 L12 7 L10 7 L10 10 L7.5 7 L1 7Z" fill="#fdfdfd" stroke="#a8a8a8" stroke-width="1"/></svg></div></div>
<div class="n" style="left:433px;top:176px;height:43px;background:#88cdf8"><div class="nt" style="padding-right:14px"><svg width="13" height="13" viewBox="0 0 13 13" style="vertical-align:-3.5px"><path d="M0.8 3.8 L6.5 0.8 L12.2 3.8 L6.5 6.8Z" fill="#f4e27a" stroke="#d8d0a0" stroke-width=".7"/><path d="M2.5 3.6 L4 2.8 M6 4.5 L7.5 3.7 M4.5 2 L6 1.3 M8 3.2 L9.5 2.4" stroke="#fff6b8" stroke-width=".9"/><path d="M0.8 3.8 L6.5 6.8 L6.5 12.5 L0.8 9.5Z" fill="#c8d4e4" stroke="#8a9ab0" stroke-width=".7"/><path d="M12.2 3.8 L6.5 6.8 L6.5 12.5 L12.2 9.5Z" fill="#8ea2d2" stroke="#6878a8" stroke-width=".7"/></svg>RPU_B010</div><div class="nl">Backlogged Purchase</div><div class="nl">Order Schedule Lines</div><div class="cm"><svg width="13" height="11" viewBox="0 0 13 11"><path d="M1 1 L12 1 L12 7 L10 7 L10 10 L7.5 7 L1 7Z" fill="#fdfdfd" stroke="#a8a8a8" stroke-width="1"/></svg></div></div>
<div class="n" style="left:913px;top:176px;height:43px;background:#fff"><div class="nt"><svg width="13" height="13" viewBox="0 0 13 13" style="vertical-align:-3.5px"><path d="M0.8 3.8 L6.5 0.8 L12.2 3.8 L6.5 6.8Z" fill="#f4e27a" stroke="#d8d0a0" stroke-width=".7"/><path d="M2.5 3.6 L4 2.8 M6 4.5 L7.5 3.7 M4.5 2 L6 1.3 M8 3.2 L9.5 2.4" stroke="#fff6b8" stroke-width=".9"/><path d="M0.8 3.8 L6.5 6.8 L6.5 12.5 L0.8 9.5Z" fill="#c8d4e4" stroke="#8a9ab0" stroke-width=".7"/><path d="M12.2 3.8 L6.5 6.8 L6.5 12.5 L12.2 9.5Z" fill="#8ea2d2" stroke="#6878a8" stroke-width=".7"/></svg>RSR_B002</div><div class="nl">Procurement Account</div><div class="nl">Assignment</div></div>
<div class="n" style="left:1233px;top:176px;height:30px;background:#fff"><div class="nt"><svg width="13" height="13" viewBox="0 0 13 13" style="vertical-align:-3.5px"><path d="M0.8 3.8 L6.5 0.8 L12.2 3.8 L6.5 6.8Z" fill="#f4e27a" stroke="#d8d0a0" stroke-width=".7"/><path d="M2.5 3.6 L4 2.8 M6 4.5 L7.5 3.7 M4.5 2 L6 1.3 M8 3.2 L9.5 2.4" stroke="#fff6b8" stroke-width=".9"/><path d="M0.8 3.8 L6.5 6.8 L6.5 12.5 L0.8 9.5Z" fill="#c8d4e4" stroke="#8a9ab0" stroke-width=".7"/><path d="M12.2 3.8 L6.5 6.8 L6.5 12.5 L12.2 9.5Z" fill="#8ea2d2" stroke="#6878a8" stroke-width=".7"/></svg>RSR_B001</div><div class="nl">Contract Management</div></div>
<div class="n" style="left:433px;top:332px;height:58px;background:#fff"><div class="nt"><svg width="14" height="14" viewBox="0 0 14 14" style="vertical-align:-2px;margin-top:-1px"><path d="M0.8 5.5 L0.8 11 Q0.8 13.3 6.5 13.3 Q12.2 13.3 12.2 11 L12.2 5.5Z" fill="#5f9be8" stroke="#2c64b8" stroke-width=".8"/><path d="M2.5 10.5 Q6.5 12 10.5 10.5" stroke="#9cc8f8" stroke-width="1.2" fill="none"/><ellipse cx="6.5" cy="5.5" rx="5.7" ry="1.8" fill="#d4e4f8" stroke="#2c64b8" stroke-width=".6"/><path d="M5.5 0.6 L13.6 0.6 L9.2 6.6 L5.5 6.6Z" fill="#4a78dc" stroke="#1e4aa8" stroke-width=".6"/></svg>HPU_O003</div><div class="nl">Purchase Order Item</div><div class="nl">Schedule Lines</div><div class="nl">(Harmonization)</div></div>
<div class="n" style="left:753px;top:332px;height:44px;background:#fff"><div class="nt"><svg width="14" height="14" viewBox="0 0 14 14" style="vertical-align:-2px;margin-top:-1px"><path d="M0.8 5.5 L0.8 11 Q0.8 13.3 6.5 13.3 Q12.2 13.3 12.2 11 L12.2 5.5Z" fill="#5f9be8" stroke="#2c64b8" stroke-width=".8"/><path d="M2.5 10.5 Q6.5 12 10.5 10.5" stroke="#9cc8f8" stroke-width="1.2" fill="none"/><ellipse cx="6.5" cy="5.5" rx="5.7" ry="1.8" fill="#d4e4f8" stroke="#2c64b8" stroke-width=".6"/><path d="M5.5 0.6 L13.6 0.6 L9.2 6.6 L5.5 6.6Z" fill="#4a78dc" stroke="#1e4aa8" stroke-width=".6"/></svg>HSR_O004</div><div class="nl">PO - Account Assignment</div><div class="nl">(Harmonization)</div></div>
<div class="n" style="left:993px;top:332px;height:31px;background:#fff"><div class="nt"><svg width="14" height="14" viewBox="0 0 14 14" style="vertical-align:-2px;margin-top:-1px"><path d="M0.8 5.5 L0.8 11 Q0.8 13.3 6.5 13.3 Q12.2 13.3 12.2 11 L12.2 5.5Z" fill="#5f9be8" stroke="#2c64b8" stroke-width=".8"/><path d="M2.5 10.5 Q6.5 12 10.5 10.5" stroke="#9cc8f8" stroke-width="1.2" fill="none"/><ellipse cx="6.5" cy="5.5" rx="5.7" ry="1.8" fill="#d4e4f8" stroke="#2c64b8" stroke-width=".6"/><path d="M5.5 0.6 L13.6 0.6 L9.2 6.6 L5.5 6.6Z" fill="#4a78dc" stroke="#1e4aa8" stroke-width=".6"/></svg>HSR_O4_1</div><div class="nl">HSR_O4_1</div></div>
<div class="n" style="left:1233px;top:332px;height:44px;background:#fff"><div class="nt"><svg width="14" height="14" viewBox="0 0 14 14" style="vertical-align:-2px;margin-top:-1px"><path d="M0.8 5.5 L0.8 11 Q0.8 13.3 6.5 13.3 Q12.2 13.3 12.2 11 L12.2 5.5Z" fill="#5f9be8" stroke="#2c64b8" stroke-width=".8"/><path d="M2.5 10.5 Q6.5 12 10.5 10.5" stroke="#9cc8f8" stroke-width="1.2" fill="none"/><ellipse cx="6.5" cy="5.5" rx="5.7" ry="1.8" fill="#d4e4f8" stroke="#2c64b8" stroke-width=".6"/><path d="M5.5 0.6 L13.6 0.6 L9.2 6.6 L5.5 6.6Z" fill="#4a78dc" stroke="#1e4aa8" stroke-width=".6"/></svg>HSR_O001</div><div class="nl">Contract Management</div><div class="nl">(Harmonization)</div></div>
<div class="n" style="left:353px;top:503px;height:44px;background:#fff"><div class="nt"><svg width="14" height="14" viewBox="0 0 14 14" style="vertical-align:-2px;margin-top:-1px"><path d="M0.8 5.5 L0.8 11 Q0.8 13.3 6.5 13.3 Q12.2 13.3 12.2 11 L12.2 5.5Z" fill="#5f9be8" stroke="#2c64b8" stroke-width=".8"/><path d="M2.5 10.5 Q6.5 12 10.5 10.5" stroke="#9cc8f8" stroke-width="1.2" fill="none"/><ellipse cx="6.5" cy="5.5" rx="5.7" ry="1.8" fill="#d4e4f8" stroke="#2c64b8" stroke-width=".6"/><path d="M5.5 0.6 L13.6 0.6 L9.2 6.6 L5.5 6.6Z" fill="#4a78dc" stroke="#1e4aa8" stroke-width=".6"/></svg>APU_O001</div><div class="nl">Allocation Confirm. and</div><div class="nl">Goods Receipt</div></div>
<div class="n" style="left:513px;top:503px;height:57px;background:#fff"><div class="nt"><svg width="14" height="14" viewBox="0 0 14 14" style="vertical-align:-2px;margin-top:-1px"><path d="M0.8 5.5 L0.8 11 Q0.8 13.3 6.5 13.3 Q12.2 13.3 12.2 11 L12.2 5.5Z" fill="#5f9be8" stroke="#2c64b8" stroke-width=".8"/><path d="M2.5 10.5 Q6.5 12 10.5 10.5" stroke="#9cc8f8" stroke-width="1.2" fill="none"/><ellipse cx="6.5" cy="5.5" rx="5.7" ry="1.8" fill="#d4e4f8" stroke="#2c64b8" stroke-width=".6"/><path d="M5.5 0.6 L13.6 0.6 L9.2 6.6 L5.5 6.6Z" fill="#4a78dc" stroke="#1e4aa8" stroke-width=".6"/></svg>APU_O003</div><div class="nl">Purchase Order Item</div><div class="nl">Schedule Lines</div><div class="nl">(Acquisition)</div></div>
<div class="n" style="left:753px;top:503px;height:44px;background:#fff"><div class="nt"><svg width="14" height="14" viewBox="0 0 14 14" style="vertical-align:-2px;margin-top:-1px"><path d="M0.8 5.5 L0.8 11 Q0.8 13.3 6.5 13.3 Q12.2 13.3 12.2 11 L12.2 5.5Z" fill="#5f9be8" stroke="#2c64b8" stroke-width=".8"/><path d="M2.5 10.5 Q6.5 12 10.5 10.5" stroke="#9cc8f8" stroke-width="1.2" fill="none"/><ellipse cx="6.5" cy="5.5" rx="5.7" ry="1.8" fill="#d4e4f8" stroke="#2c64b8" stroke-width=".6"/><path d="M5.5 0.6 L13.6 0.6 L9.2 6.6 L5.5 6.6Z" fill="#4a78dc" stroke="#1e4aa8" stroke-width=".6"/></svg>ASR_O004</div><div class="nl">PO - Account Assignment</div><div class="nl">(Acquisition)</div></div>
<div class="n" style="left:993px;top:503px;height:30px;background:#fff"><div class="nt"><svg width="14" height="14" viewBox="0 0 14 14" style="vertical-align:-2px;margin-top:-1px"><path d="M0.8 5.5 L0.8 11 Q0.8 13.3 6.5 13.3 Q12.2 13.3 12.2 11 L12.2 5.5Z" fill="#5f9be8" stroke="#2c64b8" stroke-width=".8"/><path d="M2.5 10.5 Q6.5 12 10.5 10.5" stroke="#9cc8f8" stroke-width="1.2" fill="none"/><ellipse cx="6.5" cy="5.5" rx="5.7" ry="1.8" fill="#d4e4f8" stroke="#2c64b8" stroke-width=".6"/><path d="M5.5 0.6 L13.6 0.6 L9.2 6.6 L5.5 6.6Z" fill="#4a78dc" stroke="#1e4aa8" stroke-width=".6"/></svg>ASR_O4_1</div><div class="nl">ASR Test Alin</div></div>
<div class="n" style="left:1153px;top:503px;height:44px;background:#fff"><div class="nt"><svg width="14" height="14" viewBox="0 0 14 14" style="vertical-align:-2px;margin-top:-1px"><path d="M0.8 5.5 L0.8 11 Q0.8 13.3 6.5 13.3 Q12.2 13.3 12.2 11 L12.2 5.5Z" fill="#5f9be8" stroke="#2c64b8" stroke-width=".8"/><path d="M2.5 10.5 Q6.5 12 10.5 10.5" stroke="#9cc8f8" stroke-width="1.2" fill="none"/><ellipse cx="6.5" cy="5.5" rx="5.7" ry="1.8" fill="#d4e4f8" stroke="#2c64b8" stroke-width=".6"/><path d="M5.5 0.6 L13.6 0.6 L9.2 6.6 L5.5 6.6Z" fill="#4a78dc" stroke="#1e4aa8" stroke-width=".6"/></svg>ASR_O001</div><div class="nl">Contract Management,</div><div class="nl">Item Level (Acq.)</div></div>
<div class="n" style="left:1313px;top:503px;height:44px;background:#fff"><div class="nt"><svg width="14" height="14" viewBox="0 0 14 14" style="vertical-align:-2px;margin-top:-1px"><path d="M0.8 5.5 L0.8 11 Q0.8 13.3 6.5 13.3 Q12.2 13.3 12.2 11 L12.2 5.5Z" fill="#5f9be8" stroke="#2c64b8" stroke-width=".8"/><path d="M2.5 10.5 Q6.5 12 10.5 10.5" stroke="#9cc8f8" stroke-width="1.2" fill="none"/><ellipse cx="6.5" cy="5.5" rx="5.7" ry="1.8" fill="#d4e4f8" stroke="#2c64b8" stroke-width=".6"/><path d="M5.5 0.6 L13.6 0.6 L9.2 6.6 L5.5 6.6Z" fill="#4a78dc" stroke="#1e4aa8" stroke-width=".6"/></svg>ASR_O002</div><div class="nl">Contract Management,</div><div class="nl">Schedule Line Level (Acq.)</div></div>
<div class="n" style="left:353px;top:673px;height:44px;background:#fff"><div class="nt" style="letter-spacing:-0.2px"><svg width="15" height="13" viewBox="0 0 15 13" style="vertical-align:-2px"><path d="M3.8 2.5 H1.6 V11.5 H3.8" fill="none" stroke="#111" stroke-width="1.3"/><path d="M3 3.5 L7.5 3.5 L9.5 8.5 L7.5 9 L6.5 12.8 L3 10Z" fill="#f1c232" stroke="#9a7a20" stroke-width=".6"/><path d="M6.2 5.5 L11.2 1 L14.2 3.6 L9.2 8.2Z" fill="#d6e2f2" stroke="#111" stroke-width="1"/><circle cx="10.8" cy="3.6" r="1.2" fill="#2a5fa8"/></svg>2LIS_02_SGR/T90C...</div><div class="nl">Produced Activity:</div><div class="nl">Delivery of Schedule Lines</div></div>
<div class="n" style="left:513px;top:673px;height:44px;background:#fff"><div class="nt" style="letter-spacing:-0.2px"><svg width="15" height="13" viewBox="0 0 15 13" style="vertical-align:-2px"><path d="M3.8 2.5 H1.6 V11.5 H3.8" fill="none" stroke="#111" stroke-width="1.3"/><path d="M3 3.5 L7.5 3.5 L9.5 8.5 L7.5 9 L6.5 12.8 L3 10Z" fill="#f1c232" stroke="#9a7a20" stroke-width=".6"/><path d="M6.2 5.5 L11.2 1 L14.2 3.6 L9.2 8.2Z" fill="#d6e2f2" stroke="#111" stroke-width="1"/><circle cx="10.8" cy="3.6" r="1.2" fill="#2a5fa8"/></svg>2LIS_02_CGR/T90C...</div><div class="nl">Produced Activity:</div><div class="nl">Delivery of Confirmations</div></div>
<div class="n" style="left:833px;top:673px;height:44px;background:#fff"><div class="nt" style="letter-spacing:-0.2px"><svg width="15" height="13" viewBox="0 0 15 13" style="vertical-align:-2px"><path d="M3.8 2.5 H1.6 V11.5 H3.8" fill="none" stroke="#111" stroke-width="1.3"/><path d="M3 3.5 L7.5 3.5 L9.5 8.5 L7.5 9 L6.5 12.8 L3 10Z" fill="#f1c232" stroke="#9a7a20" stroke-width=".6"/><path d="M6.2 5.5 L11.2 1 L14.2 3.6 L9.2 8.2Z" fill="#d6e2f2" stroke="#111" stroke-width="1"/><circle cx="10.8" cy="3.6" r="1.2" fill="#2a5fa8"/></svg>2LIS_02_ACC/T90C...</div><div class="nl">Purchasing Data (Account</div><div class="nl">Level)</div></div>
<div class="n" style="left:1153px;top:673px;height:44px;background:#fff"><div class="nt" style="letter-spacing:-0.2px"><svg width="15" height="13" viewBox="0 0 15 13" style="vertical-align:-2px"><path d="M3.8 2.5 H1.6 V11.5 H3.8" fill="none" stroke="#111" stroke-width="1.3"/><path d="M3 3.5 L7.5 3.5 L9.5 8.5 L7.5 9 L6.5 12.8 L3 10Z" fill="#f1c232" stroke="#9a7a20" stroke-width=".6"/><path d="M6.2 5.5 L11.2 1 L14.2 3.6 L9.2 8.2Z" fill="#d6e2f2" stroke="#111" stroke-width="1"/><circle cx="10.8" cy="3.6" r="1.2" fill="#2a5fa8"/></svg>2LIS_02_ITM/T90C...</div><div class="nl">Purchasing Data (Item</div><div class="nl">Level)</div></div>
<div class="n" style="left:1313px;top:673px;height:44px;background:#fff"><div class="nt" style="letter-spacing:-0.2px"><svg width="15" height="13" viewBox="0 0 15 13" style="vertical-align:-2px"><path d="M3.8 2.5 H1.6 V11.5 H3.8" fill="none" stroke="#111" stroke-width="1.3"/><path d="M3 3.5 L7.5 3.5 L9.5 8.5 L7.5 9 L6.5 12.8 L3 10Z" fill="#f1c232" stroke="#9a7a20" stroke-width=".6"/><path d="M6.2 5.5 L11.2 1 L14.2 3.6 L9.2 8.2Z" fill="#d6e2f2" stroke="#111" stroke-width="1"/><circle cx="10.8" cy="3.6" r="1.2" fill="#2a5fa8"/></svg>2LIS_02_SCL/T90CL...</div><div class="nl">Purchasing Data</div><div class="nl">(Schedule Line Level)</div></div>
</body></html>
